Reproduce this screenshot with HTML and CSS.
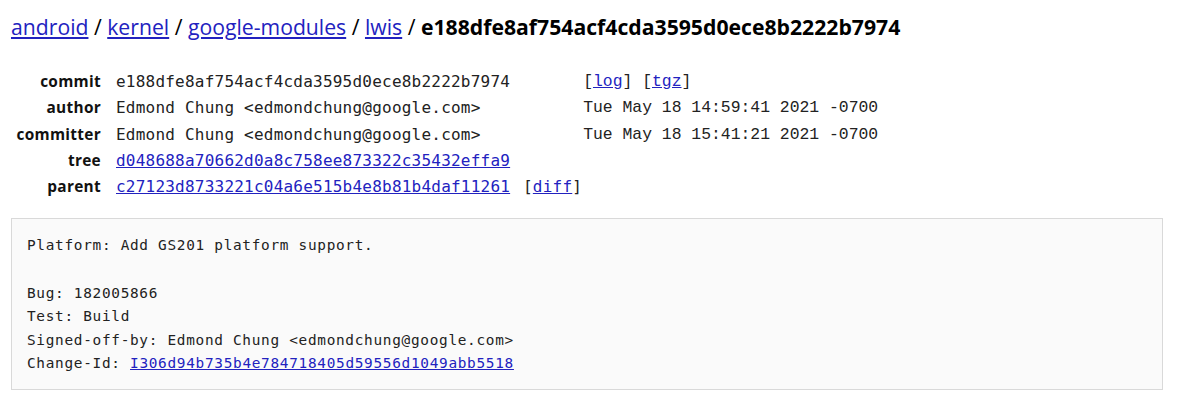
FILE: index.html
```html
<!DOCTYPE html>
<html>
<head>
<meta charset="utf-8">
<link rel="stylesheet" href="styles.css">
</head>
<body>
<div class="page">
  <h1 class="crumbs"><a href="#">android</a> / <a href="#">kernel</a> / <a href="#">google-modules</a> / <a href="#">lwis</a> / <span class="hash">e188dfe8af754acf4cda3595d0ece8b2222b7974</span></h1>
  <table class="meta">
    <tr><th>commit</th><td class="sha">e188dfe8af754acf4cda3595d0ece8b2222b7974</td><td class="extra">[<a href="#">log</a>] [<a href="#">tgz</a>]</td></tr>
    <tr><th>author</th><td class="sha">Edmond Chung &lt;edmondchung@google.com&gt;</td><td class="extra">Tue May 18 14:59:41 2021 -0700</td></tr>
    <tr><th>committer</th><td class="sha">Edmond Chung &lt;edmondchung@google.com&gt;</td><td class="extra">Tue May 18 15:41:21 2021 -0700</td></tr>
    <tr><th>tree</th><td class="sha"><a href="#">d048688a70662d0a8c758ee873322c35432effa9</a></td><td></td></tr>
    <tr><th>parent</th><td class="sha" colspan="2"><a href="#">c27123d8733221c04a6e515b4e8b81b4daf11261</a> <span class="diff">[<a href="#">diff</a>]</span></td></tr>
  </table>
  <pre class="message">Platform: Add GS201 platform support.

Bug: 182005866
Test: Build
Signed-off-by: Edmond Chung &lt;edmondchung@google.com&gt;
Change-Id: <a href="#">I306d94b735b4e784718405d59556d1049abb5518</a></pre>
</div>
</body>
</html>
```
FILE: styles.css
```css
html, body {
  margin: 0;
  padding: 0;
  background: #fff;
  color: #000;
  font-family: "Open Sans", "Liberation Sans", sans-serif;
}
a { color: #2222bf; text-decoration: underline; }
.page {
  padding: 0 16px 0 11px;
}
.crumbs {
  margin: 0;
  padding-top: 11px;
  font-size: 21.2px;
  font-weight: normal;
  line-height: 32px;
}
.crumbs .hash {
  font-weight: bold;
}
.meta {
  border-collapse: collapse;
  margin-top: 26px;
  margin-left: 0;
}
.meta th {
  font-family: "Open Sans", sans-serif;
  font-weight: 700;
  font-size: 15.4px;
  letter-spacing: 0.3px;
  text-align: right;
  width: 88px;
  padding: 0 15px 0 2px;
  height: 26.3px;
  line-height: 26.3px;
  vertical-align: middle;
  color: #111;
}
.meta td {
  padding: 0;
  height: 26.3px;
  line-height: 26.3px;
  vertical-align: middle;
  white-space: nowrap;
}
.meta .sha {
  font-family: "DejaVu Sans Mono", monospace;
  font-size: 16px;
  color: #222;
  letter-spacing: 0.22px;
}
.meta .extra {
  font-family: "Liberation Mono", monospace;
  font-size: 16.4px;
  color: #222;
  padding-left: 73px;
  letter-spacing: 0;
}
.meta .diff { margin-left: 3px; }
.message {
  margin: 18px 0 0 0;
  padding: 15px 15px 13px 15px;
  background: #fafafa;
  border: 1px solid #d9d9d9;
  font-family: "DejaVu Sans Mono", monospace;
  font-size: 14.4px;
  line-height: 23.6px;
  color: #222;
  letter-spacing: 0.7px;
}
```
